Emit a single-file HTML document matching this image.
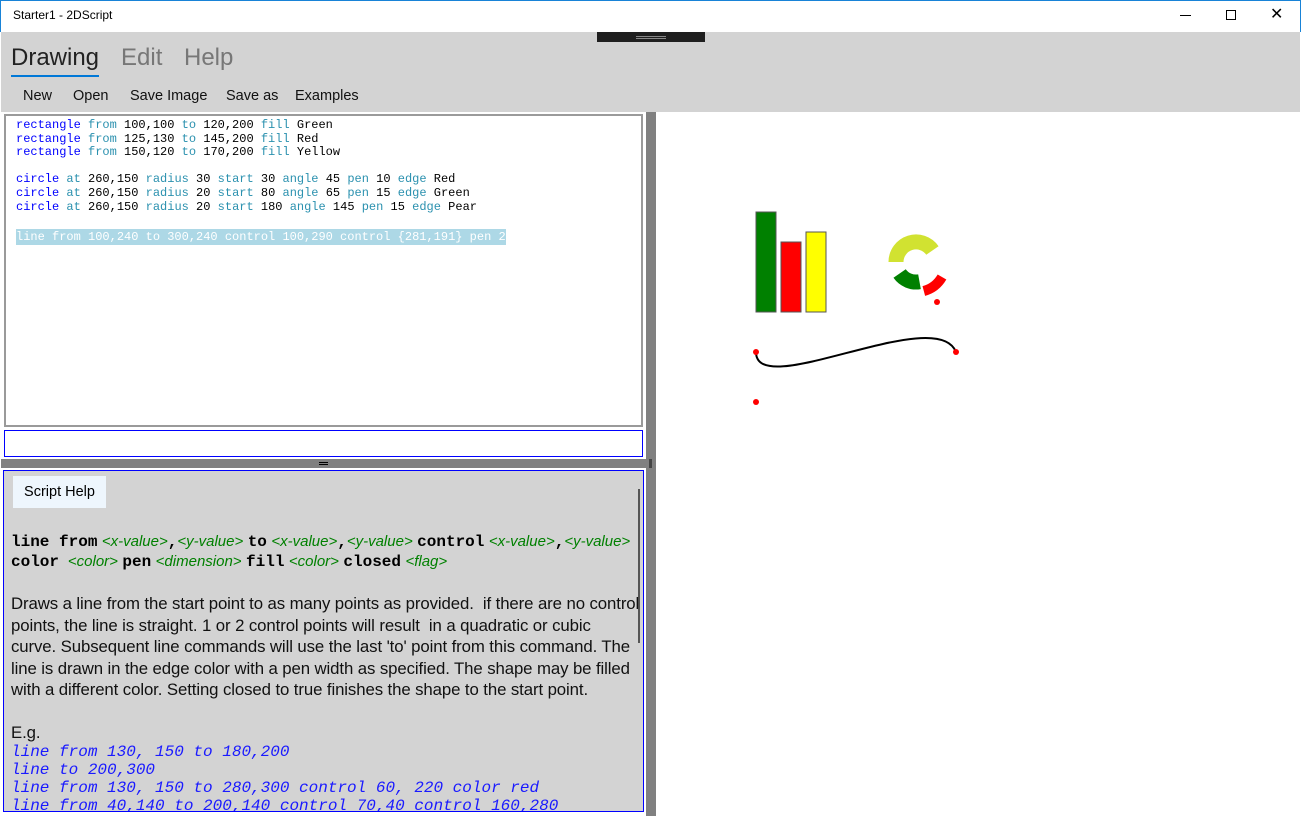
<!DOCTYPE html>
<html><head><meta charset="utf-8"><style>
*{margin:0;padding:0;box-sizing:border-box}
body{width:1301px;height:816px;overflow:hidden;background:#fff;font-family:"Liberation Sans",sans-serif;position:relative}
.abs{position:absolute}
.mono{font-family:"Liberation Mono","Courier New",monospace}
.k{color:#0000ff}.a{color:#2b91af}
.ed div{height:13.6px;white-space:pre}
.g{color:#008000;font-style:italic;font-family:"Liberation Sans",sans-serif;font-size:15px}
.b{font-family:"Liberation Mono",monospace;font-weight:bold;font-size:16px}
.body div{white-space:nowrap;height:21.5px}
.ex div{height:18px;white-space:pre}
</style></head><body>
<div class="abs" style="left:0;top:0;width:1301px;height:32px;border:1px solid #1883d7;border-bottom:none"></div>
<div class="abs" style="left:13px;top:8px;font-size:12px;color:#000">Starter1 - 2DScript</div>
<div class="abs" style="left:1180px;top:15px;width:11px;height:1px;background:#000"></div>
<div class="abs" style="left:1226px;top:10px;width:10px;height:10px;border:1px solid #000"></div>
<div class="abs" style="left:1270px;top:7px;font-size:16px;line-height:16px">✕</div>
<div class="abs" style="left:1px;top:32px;width:1299px;height:80px;background:#d3d3d3"></div>
<div class="abs" style="left:597px;top:32px;width:108px;height:10px;background:#1f1f1f"></div>
<div class="abs" style="left:636px;top:36px;width:30px;height:1px;background:#888"></div>
<div class="abs" style="left:636px;top:38px;width:30px;height:1px;background:#888"></div>
<div class="abs" style="left:11px;top:44px;font-size:24px;color:#222">Drawing</div>
<div class="abs" style="left:11px;top:75px;width:88px;height:2px;background:#0078d7"></div>
<div class="abs" style="left:121px;top:44px;font-size:24px;color:#777">Edit</div>
<div class="abs" style="left:184px;top:44px;font-size:24px;color:#777">Help</div>
<div class="abs" style="left:23px;top:88px;font-size:14.5px;color:#111">New</div>
<div class="abs" style="left:73px;top:88px;font-size:14.5px;color:#111">Open</div>
<div class="abs" style="left:130px;top:88px;font-size:14.5px;color:#111">Save Image</div>
<div class="abs" style="left:226px;top:88px;font-size:14.5px;color:#111">Save as</div>
<div class="abs" style="left:295px;top:88px;font-size:14.5px;color:#111">Examples</div>
<div class="abs" style="left:1px;top:112px;width:645px;height:704px;background:#fff"></div>
<div class="abs" style="left:646px;top:112px;width:10px;height:704px;background:#808080"></div>
<div class="abs" style="left:1px;top:459px;width:649px;height:9px;background:#808080"></div>
<div class="abs" style="left:319px;top:462px;width:9px;height:1px;background:#000"></div>
<div class="abs" style="left:319px;top:464px;width:9px;height:1px;background:#000"></div>
<div class="abs" style="left:649px;top:459px;width:3px;height:9px;background:#444"></div>
<div class="abs" style="left:4px;top:114px;width:639px;height:313px;border:2px solid #9a9a9a"></div>
<div class="abs mono ed" style="left:16px;top:118px;font-size:12px;color:#000">
<div><span class="k">rectangle</span> <span class="a">from</span> 100,100 <span class="a">to</span> 120,200 <span class="a">fill</span> Green</div>
<div><span class="k">rectangle</span> <span class="a">from</span> 125,130 <span class="a">to</span> 145,200 <span class="a">fill</span> Red</div>
<div><span class="k">rectangle</span> <span class="a">from</span> 150,120 <span class="a">to</span> 170,200 <span class="a">fill</span> Yellow</div>
<div> </div>
<div><span class="k">circle</span> <span class="a">at</span> 260,150 <span class="a">radius</span> 30 <span class="a">start</span> 30 <span class="a">angle</span> 45 <span class="a">pen</span> 10 <span class="a">edge</span> Red</div>
<div><span class="k">circle</span> <span class="a">at</span> 260,150 <span class="a">radius</span> 20 <span class="a">start</span> 80 <span class="a">angle</span> 65 <span class="a">pen</span> 15 <span class="a">edge</span> Green</div>
<div><span class="k">circle</span> <span class="a">at</span> 260,150 <span class="a">radius</span> 20 <span class="a">start</span> 180 <span class="a">angle</span> 145 <span class="a">pen</span> 15 <span class="a">edge</span> Pear</div>
<div> </div>
<div style="margin-top:3px"><span style="background:#add8e6;color:#fff;padding:1px 0">line from 100,240 to 300,240 control 100,290 control {281,191} pen 2</span></div>
</div>
<div class="abs" style="left:4px;top:430px;width:639px;height:27px;border:1px solid #0000ff"></div>
<div class="abs" style="left:3px;top:470px;width:641px;height:342px;border:1px solid #0000ff;background:#d3d3d3;overflow:hidden">
<div class="abs" style="left:9px;top:5px;width:93px;height:32px;background:#eef6fd;font-size:14.5px;line-height:32px;text-align:center">Script Help</div>
<div class="abs" style="left:634px;top:18px;width:2px;height:154px;background:#555"></div>
<div class="abs" style="left:7px;top:61px;white-space:nowrap;line-height:20px">
<div><span class="b">line from</span> <span class="g">&lt;x-value&gt;</span><span class="b">,</span><span class="g">&lt;y-value&gt;</span> <span class="b">to</span> <span class="g">&lt;x-value&gt;</span><span class="b">,</span><span class="g">&lt;y-value&gt;</span> <span class="b">control</span> <span class="g">&lt;x-value&gt;</span><span class="b">,</span><span class="g">&lt;y-value&gt;</span></div>
<div><span class="b">color</span> &nbsp;<span class="g">&lt;color&gt;</span> <span class="b">pen</span> <span class="g">&lt;dimension&gt;</span> <span class="b">fill</span> <span class="g">&lt;color&gt;</span> <span class="b">closed</span> <span class="g">&lt;flag&gt;</span></div>
</div>
<div class="abs body" style="left:7px;top:122px;font-size:16.8px;line-height:21.5px;color:#111;letter-spacing:-0.1px">
<div>Draws a line from the start point to as many points as provided.&nbsp; if there are no control</div>
<div>points, the line is straight. 1 or 2 control points will result&nbsp; in a quadratic or cubic</div>
<div>curve. Subsequent line commands will use the last 'to' point from this command. The</div>
<div>line is drawn in the edge color with a pen width as specified. The shape may be filled</div>
<div>with a different color. Setting closed to true finishes the shape to the start point.</div>
<div></div>
<div>E.g.</div>
</div>
<div class="abs mono ex" style="left:7px;top:272px;font-size:16px;line-height:18px;color:#1a1aff;font-style:italic">
<div>line from 130, 150 to 180,200</div>
<div>line to 200,300</div>
<div>line from 130, 150 to 280,300 control 60, 220 color red</div>
<div>line from 40,140 to 200,140 control 70,40 control 160,280</div>
</div>
</div>
<svg class="abs" style="left:0;top:0" width="1301" height="816">
<rect x="756" y="212" width="20" height="100" fill="#008000" stroke="#555" stroke-width="1"/>
<rect x="781" y="242" width="20" height="70" fill="#ff0000" stroke="#555" stroke-width="1"/>
<rect x="806" y="232" width="20" height="80" fill="#ffff00" stroke="#555" stroke-width="1"/>
<path d="M896 262 A20 20 0 0 1 932.4 250.5" fill="none" stroke="#d1e231" stroke-width="15"/>
<path d="M919.5 281.7 A20 20 0 0 1 899.6 273.5" fill="none" stroke="#008000" stroke-width="15"/>
<path d="M942 277 A30 30 0 0 1 923.8 291" fill="none" stroke="#ff0000" stroke-width="10"/>
<path d="M756 352 C756 402 937 303 956 352" fill="none" stroke="#000" stroke-width="2"/>
<circle cx="756" cy="352" r="3" fill="red"/><circle cx="956" cy="352" r="3" fill="red"/>
<circle cx="756" cy="402" r="3" fill="red"/><circle cx="937" cy="302" r="3" fill="red"/>
</svg>
</body></html>
